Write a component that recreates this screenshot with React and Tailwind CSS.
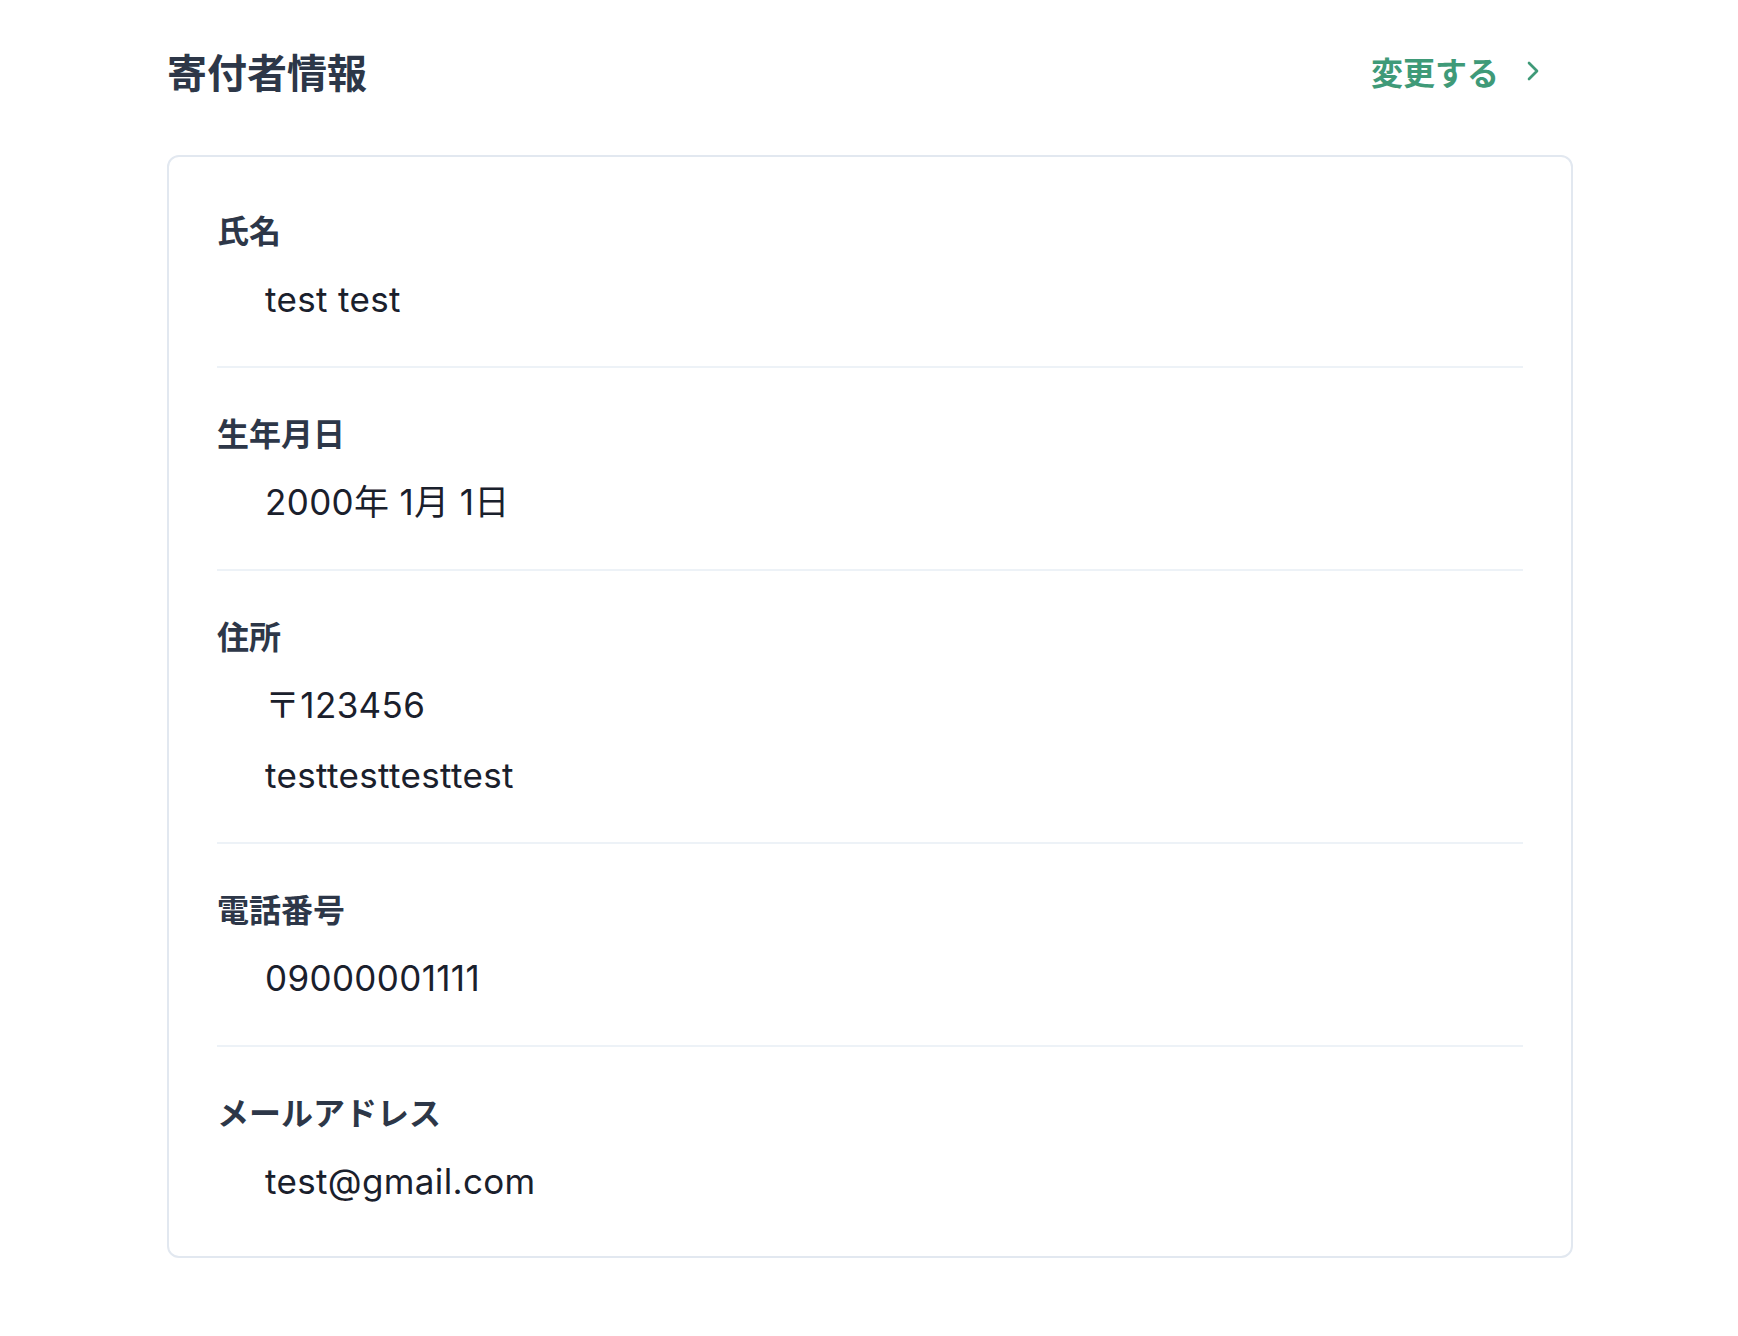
import React from "react";
import { ChevronRight } from "lucide-react";

const rows = [
  { label: "氏名", values: ["test test"] },
  { label: "生年月日", values: ["2000年 1月 1日"] },
  { label: "住所", values: ["〒123456", "testtesttesttest"] },
  { label: "電話番号", values: ["09000001111"] },
  { label: "メールアドレス", values: ["test@gmail.com"] },
];

export default function App() {
  return (
    <div className="min-h-screen bg-white font-['Inter','Noto_Sans_CJK_JP',sans-serif]">
      <div className="w-[1406px] ml-[167px] pt-[43px]">
        <div className="flex items-center justify-between h-[56px]">
          <h2 className="text-[40px] leading-[56px] font-bold text-[#2d3748] font-['Noto_Sans_CJK_JP',sans-serif]">
            寄付者情報
          </h2>
          <a className="flex items-center mr-[24px] text-[#3f9a78] font-bold font-['Noto_Sans_CJK_JP',sans-serif]">
            <span className="text-[32px] leading-[48px]">変更する</span>
            <ChevronRight size={32} strokeWidth={2} className="ml-[18px]" />
          </a>
        </div>
        <div className="mt-[56px] border-2 border-[#e2e8f0] rounded-xl px-12 py-2">
          {rows.map((row, i) => (
            <div
              key={row.label}
              className={
                i < rows.length - 1
                  ? "py-10 border-b-2 border-[#edf2f7]"
                  : "py-10"
              }
            >
              <div className="text-[32px] leading-[48px] font-bold text-[#2d3748] font-['Noto_Sans_CJK_JP',sans-serif]">
                {row.label}
              </div>
              <div className="mt-[19px] pl-12 flex flex-col gap-[16px]">
                {row.values.map((v) => (
                  <div
                    key={v}
                    className="text-[35px] leading-[54px] tracking-[0.01em] text-[#1a202c]"
                  >
                    {v}
                  </div>
                ))}
              </div>
            </div>
          ))}
        </div>
      </div>
    </div>
  );
}
